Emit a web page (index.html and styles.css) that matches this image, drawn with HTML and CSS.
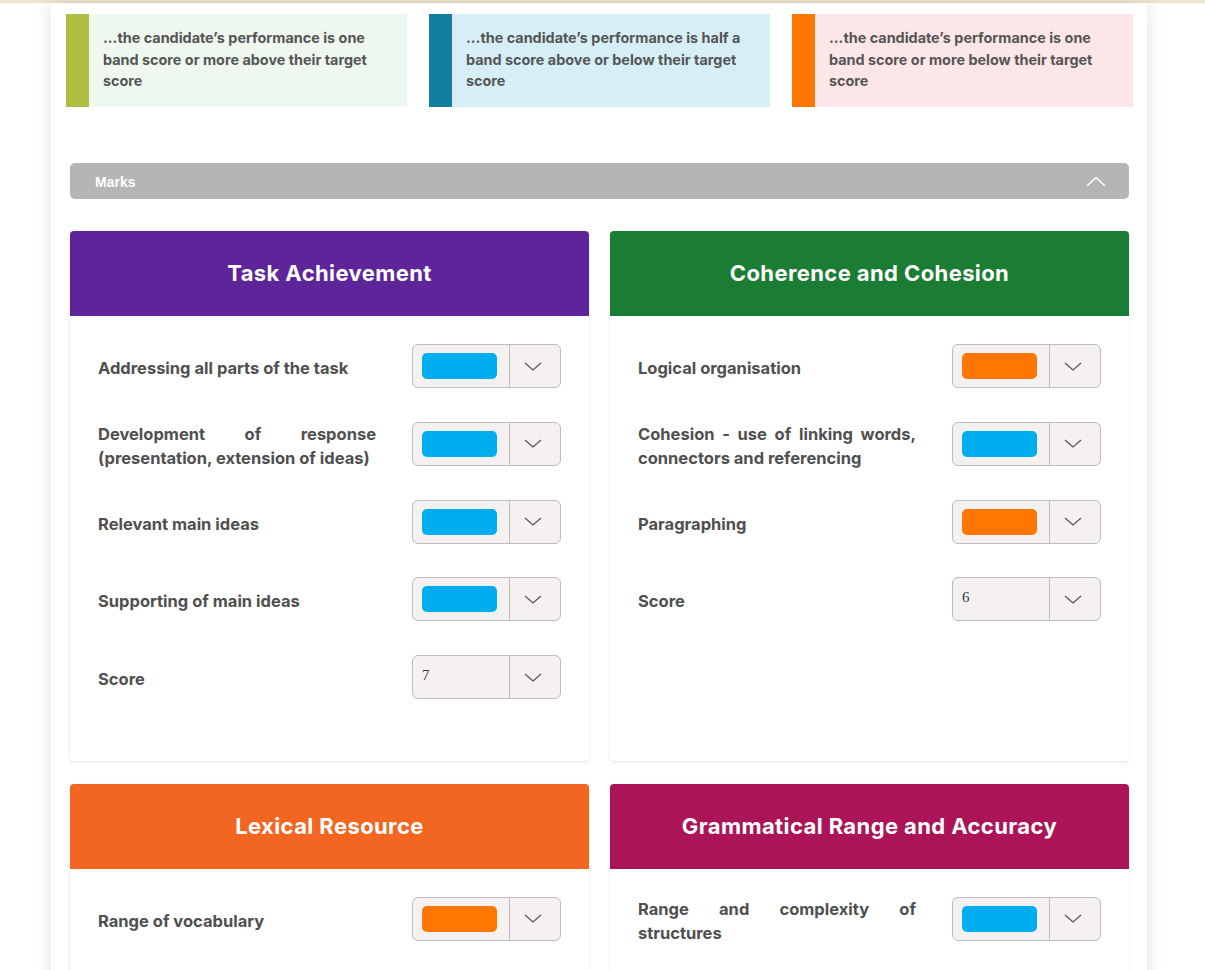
FILE: index.html
```html
<!DOCTYPE html>
<html lang="en">
<head>
<meta charset="utf-8">
<title>Marks</title>
<link rel="stylesheet" href="styles.css">
</head>
<body>
<div class="topline"></div>
<div class="page">
  <div class="legend">
    <div class="legend-item above">
      <div class="stripe"></div>
      <p>...the candidate’s performance is one band score or more above their target score</p>
    </div>
    <div class="legend-item near">
      <div class="stripe"></div>
      <p>...the candidate’s performance is half a band score above or below their target score</p>
    </div>
    <div class="legend-item below">
      <div class="stripe"></div>
      <p>...the candidate’s performance is one band score or more below their target score</p>
    </div>
  </div>

  <div class="marks">
    <div class="marks-bar">
      <span>Marks</span>
      <svg class="chev-up" width="20" height="11" viewBox="0 0 20 11"><polyline points="1,10 10,1.5 19,10" fill="none" stroke="#fff" stroke-width="1.4"/></svg>
    </div>

    <div class="cards">
      <section class="card">
        <header class="card-head purple">Task Achievement</header>
        <div class="card-body">
          <div class="row"><div class="label">Addressing all parts of the task</div><div class="select"><div class="value"><span class="pill blue"></span></div><div class="arrow"><svg width="18" height="9" viewBox="0 0 18 9"><polyline points="1,1 9,8 17,1" fill="none" stroke="#555" stroke-width="1.2"/></svg></div></div></div>
          <div class="row"><div class="label">Development of response (presentation, extension of ideas)</div><div class="select"><div class="value"><span class="pill blue"></span></div><div class="arrow"><svg width="18" height="9" viewBox="0 0 18 9"><polyline points="1,1 9,8 17,1" fill="none" stroke="#555" stroke-width="1.2"/></svg></div></div></div>
          <div class="row"><div class="label">Relevant main ideas</div><div class="select"><div class="value"><span class="pill blue"></span></div><div class="arrow"><svg width="18" height="9" viewBox="0 0 18 9"><polyline points="1,1 9,8 17,1" fill="none" stroke="#555" stroke-width="1.2"/></svg></div></div></div>
          <div class="row"><div class="label">Supporting of main ideas</div><div class="select"><div class="value"><span class="pill blue"></span></div><div class="arrow"><svg width="18" height="9" viewBox="0 0 18 9"><polyline points="1,1 9,8 17,1" fill="none" stroke="#555" stroke-width="1.2"/></svg></div></div></div>
          <div class="row"><div class="label">Score</div><div class="select"><div class="value"><span class="num">7</span></div><div class="arrow"><svg width="18" height="9" viewBox="0 0 18 9"><polyline points="1,1 9,8 17,1" fill="none" stroke="#555" stroke-width="1.2"/></svg></div></div></div>
        </div>
      </section>

      <section class="card">
        <header class="card-head green">Coherence and Cohesion</header>
        <div class="card-body">
          <div class="row"><div class="label">Logical organisation</div><div class="select"><div class="value"><span class="pill orange"></span></div><div class="arrow"><svg width="18" height="9" viewBox="0 0 18 9"><polyline points="1,1 9,8 17,1" fill="none" stroke="#555" stroke-width="1.2"/></svg></div></div></div>
          <div class="row"><div class="label">Cohesion - use of linking words, connectors and referencing</div><div class="select"><div class="value"><span class="pill blue"></span></div><div class="arrow"><svg width="18" height="9" viewBox="0 0 18 9"><polyline points="1,1 9,8 17,1" fill="none" stroke="#555" stroke-width="1.2"/></svg></div></div></div>
          <div class="row"><div class="label">Paragraphing</div><div class="select"><div class="value"><span class="pill orange"></span></div><div class="arrow"><svg width="18" height="9" viewBox="0 0 18 9"><polyline points="1,1 9,8 17,1" fill="none" stroke="#555" stroke-width="1.2"/></svg></div></div></div>
          <div class="row"><div class="label">Score</div><div class="select"><div class="value"><span class="num">6</span></div><div class="arrow"><svg width="18" height="9" viewBox="0 0 18 9"><polyline points="1,1 9,8 17,1" fill="none" stroke="#555" stroke-width="1.2"/></svg></div></div></div>
        </div>
      </section>

      <section class="card">
        <header class="card-head tangerine">Lexical Resource</header>
        <div class="card-body">
          <div class="row"><div class="label">Range of vocabulary</div><div class="select"><div class="value"><span class="pill orange"></span></div><div class="arrow"><svg width="18" height="9" viewBox="0 0 18 9"><polyline points="1,1 9,8 17,1" fill="none" stroke="#555" stroke-width="1.2"/></svg></div></div></div>
          <div class="row"><div class="label">Accuracy of vocabulary</div><div class="select"><div class="value"><span class="pill blue"></span></div><div class="arrow"><svg width="18" height="9" viewBox="0 0 18 9"><polyline points="1,1 9,8 17,1" fill="none" stroke="#555" stroke-width="1.2"/></svg></div></div></div>
          <div class="row"><div class="label">Spelling</div><div class="select"><div class="value"><span class="pill blue"></span></div><div class="arrow"><svg width="18" height="9" viewBox="0 0 18 9"><polyline points="1,1 9,8 17,1" fill="none" stroke="#555" stroke-width="1.2"/></svg></div></div></div>
          <div class="row"><div class="label">Score</div><div class="select"><div class="value"><span class="num">6</span></div><div class="arrow"><svg width="18" height="9" viewBox="0 0 18 9"><polyline points="1,1 9,8 17,1" fill="none" stroke="#555" stroke-width="1.2"/></svg></div></div></div>
        </div>
      </section>

      <section class="card">
        <header class="card-head magenta">Grammatical Range and Accuracy</header>
        <div class="card-body">
          <div class="row"><div class="label">Range and complexity of structures</div><div class="select"><div class="value"><span class="pill blue"></span></div><div class="arrow"><svg width="18" height="9" viewBox="0 0 18 9"><polyline points="1,1 9,8 17,1" fill="none" stroke="#555" stroke-width="1.2"/></svg></div></div></div>
          <div class="row"><div class="label">Accuracy of grammar</div><div class="select"><div class="value"><span class="pill blue"></span></div><div class="arrow"><svg width="18" height="9" viewBox="0 0 18 9"><polyline points="1,1 9,8 17,1" fill="none" stroke="#555" stroke-width="1.2"/></svg></div></div></div>
          <div class="row"><div class="label">Punctuation</div><div class="select"><div class="value"><span class="pill orange"></span></div><div class="arrow"><svg width="18" height="9" viewBox="0 0 18 9"><polyline points="1,1 9,8 17,1" fill="none" stroke="#555" stroke-width="1.2"/></svg></div></div></div>
          <div class="row"><div class="label">Score</div><div class="select"><div class="value"><span class="num">7</span></div><div class="arrow"><svg width="18" height="9" viewBox="0 0 18 9"><polyline points="1,1 9,8 17,1" fill="none" stroke="#555" stroke-width="1.2"/></svg></div></div></div>
        </div>
      </section>
    </div>
  </div>
</div>
</body>
</html>
```

FILE: styles.css
```css
* { box-sizing: border-box; }

html, body {
  margin: 0;
  padding: 0;
  background: #ffffff;
}

body {
  font-family: Inter, Lato, "Open Sans", sans-serif;
  color: #545454;
}

.topline {
  height: 3px;
  background: #f1e6d1;
  border-bottom: 1px solid #ece0c8;
}

.page {
  width: 1096px;
  margin-left: 51px;
  background: #ffffff;
  box-shadow: 0 0 18px rgba(0, 0, 0, 0.12);
  padding: 11px 14px 40px 15px;
}

.legend {
  display: grid;
  grid-template-columns: repeat(3, 1fr);
  gap: 22px;
}

.legend-item {
  display: flex;
  height: 93px;
}

.legend-item .stripe {
  width: 23px;
  flex: none;
}

.legend-item p {
  margin: 0;
  padding: 13px 18px 0 14px;
  font-size: 14.4px;
  line-height: 21.5px;
  font-weight: 700;
  color: #555555;
}

.legend-item.above { background: #eef8ef; }
.legend-item.above .stripe { background: #b0be40; }
.legend-item.near { background: #d6eff6; }
.legend-item.near .stripe { background: #127f9f; }
.legend-item.below { background: #fde6e7; }
.legend-item.below .stripe { background: #ff7600; }

.marks {
  margin: 56px 4px 0 4px;
}

.marks-bar {
  height: 36px;
  background: #b5b5b6;
  border-radius: 5px;
  display: flex;
  align-items: center;
  justify-content: space-between;
  padding: 1px 23px 0 25px;
  color: #ffffff;
  font-family: "Liberation Sans", Arial, sans-serif;
  font-weight: 700;
  font-size: 14px;
}

.chev-up { display: block; }

.cards {
  margin-top: 32px;
  display: grid;
  grid-template-columns: 519px 519px;
  column-gap: 21px;
  row-gap: 23px;
}

.card {
  background: #ffffff;
  border-radius: 4px;
  overflow: hidden;
  box-shadow: 0 1px 3px rgba(0, 0, 0, 0.13);
}

.card-head {
  height: 85px;
  display: flex;
  align-items: center;
  justify-content: center;
  color: #ffffff;
  font-size: 22px;
  font-weight: 700;
  letter-spacing: 0.4px;
  padding-bottom: 1px;
}

.card-head.purple { background: #5e259b; }
.card-head.green { background: #1b7c34; }
.card-head.tangerine { background: #f26622; }
.card-head.magenta { background: #ab1557; }

.card-body {
  padding: 28px;
}

.row {
  height: 44px;
  margin-bottom: 33.75px;
  display: flex;
  align-items: center;
  justify-content: space-between;
}

.label {
  width: 278px;
  font-size: 16.5px;
  line-height: 24px;
  font-weight: 700;
  color: #4f4f4f;
  text-align: justify;
  padding-top: 4px;
}

.select {
  width: 149px;
  height: 44px;
  display: flex;
  background: #f4f1f0;
  border: 1px solid #bcbcbc;
  border-radius: 6px;
}

.select .value {
  width: 97px;
  border-right: 1px solid #bcbcbc;
  display: flex;
  align-items: center;
  padding-left: 9px;
}

.select .arrow {
  flex: 1;
  display: flex;
  align-items: center;
  justify-content: center;
  padding-right: 5px;
}

.select .arrow svg { display: block; }

.pill {
  display: block;
  width: 75px;
  height: 26px;
  border-radius: 5px;
}

.pill.blue { background: #00adee; }
.pill.orange { background: #ff7600; }

.num {
  font-family: "Liberation Serif", "Times New Roman", serif;
  font-size: 15px;
  color: #333340;
  margin-top: -3px;
}
```
